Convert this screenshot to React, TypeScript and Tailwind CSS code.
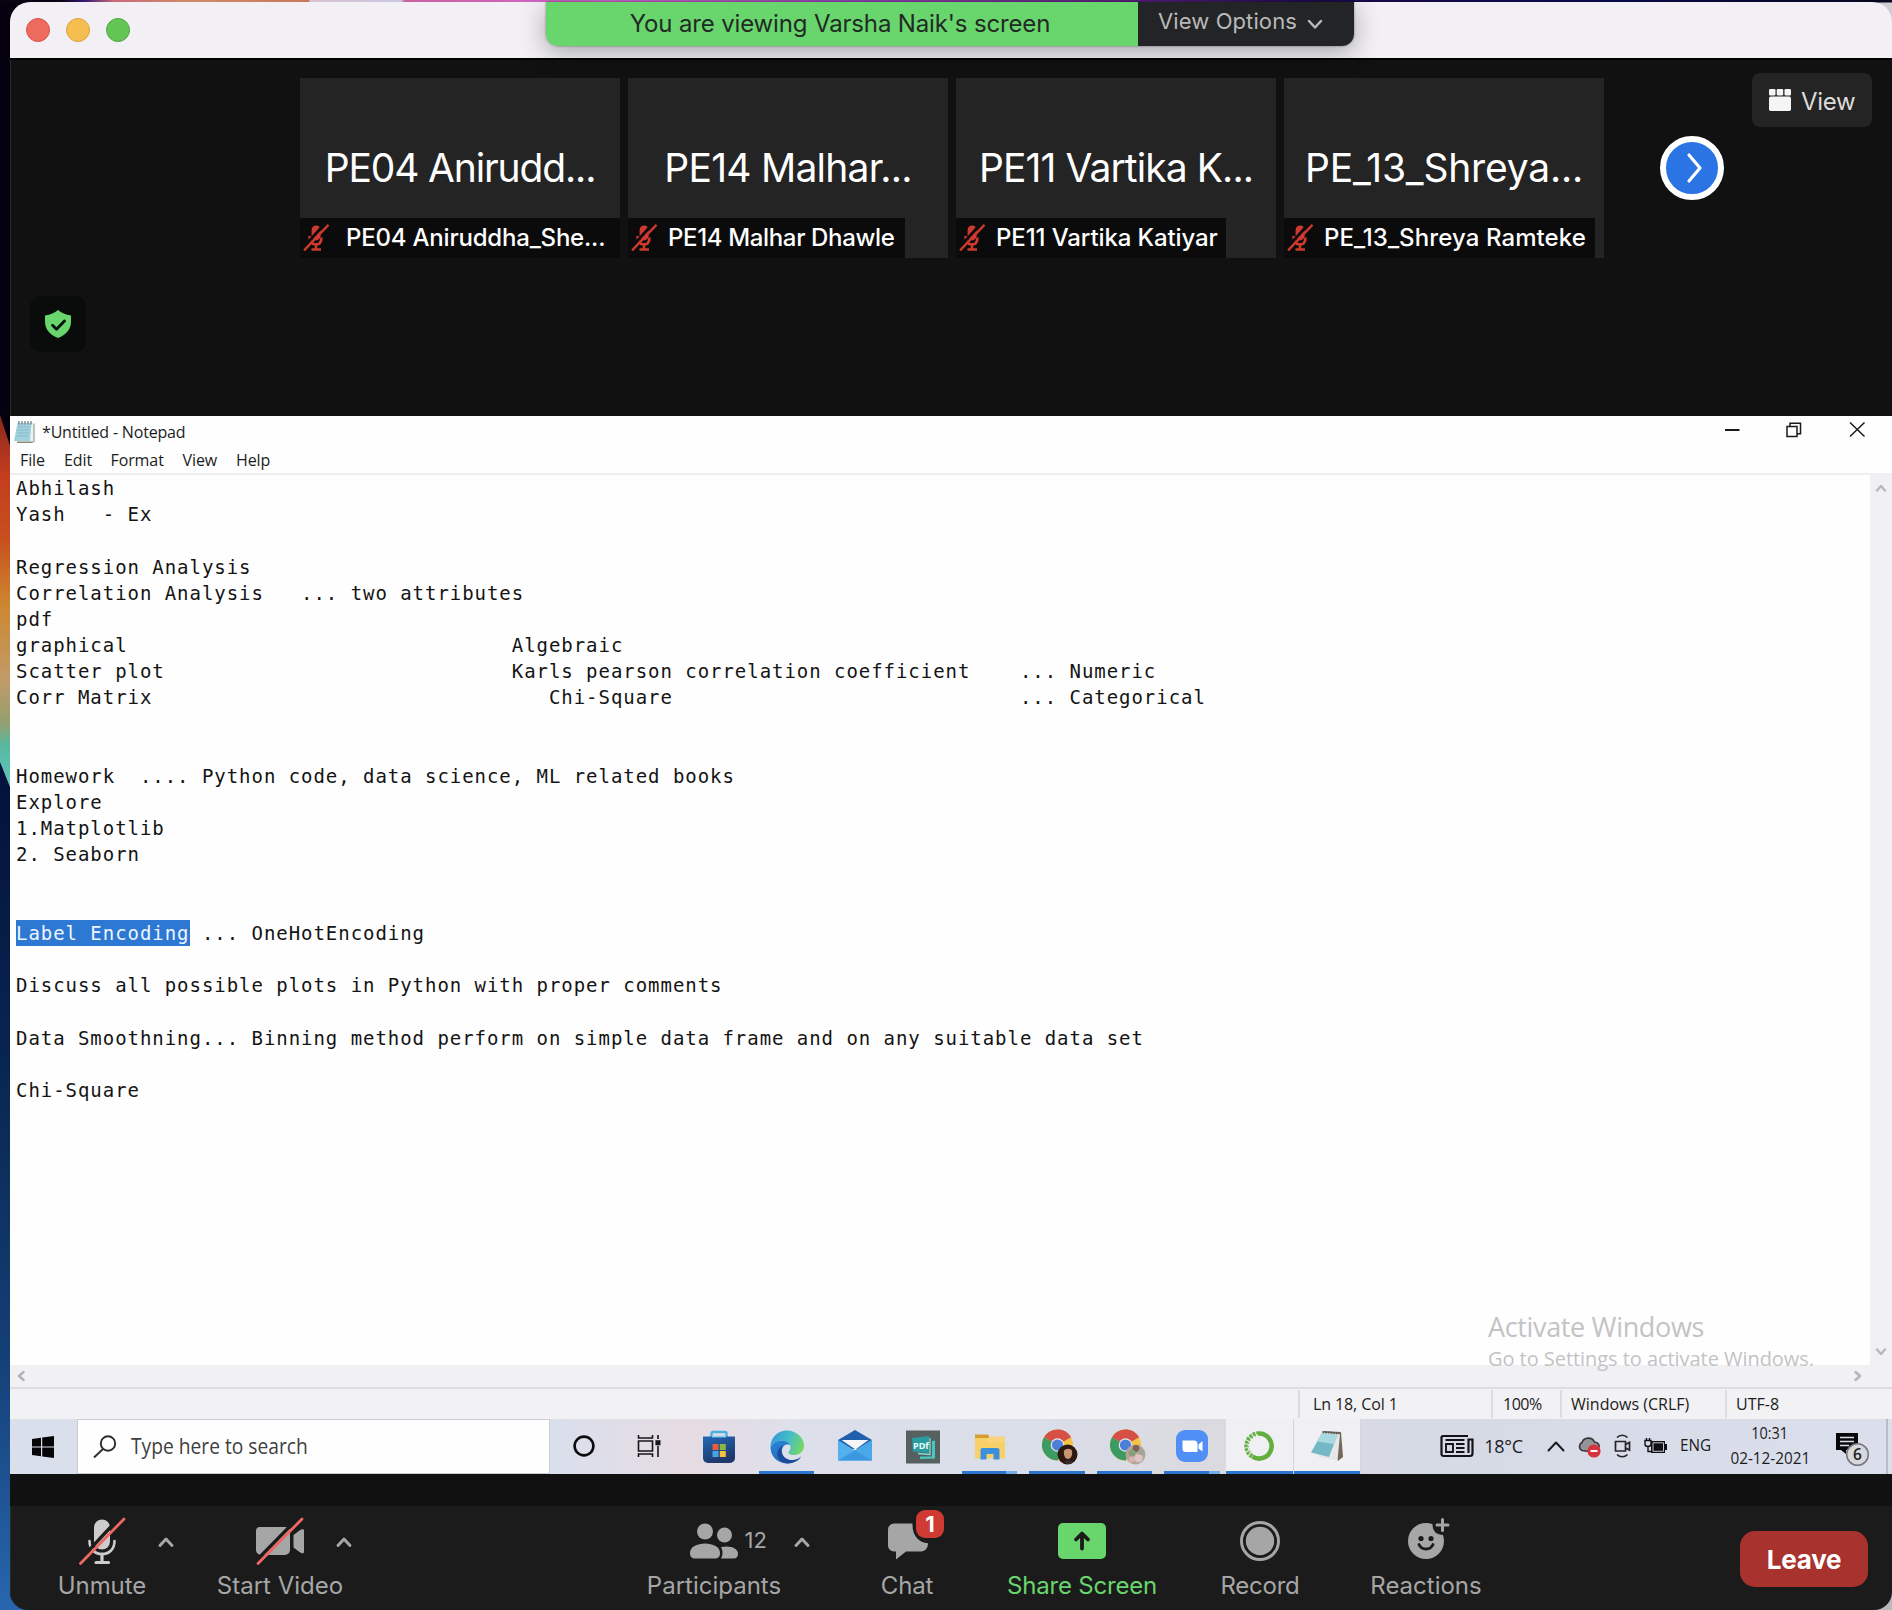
import type { ReactNode } from 'react';

/* ---------- shared icons ---------- */

function MutedMic() {
  return (
    <svg width="26" height="28" viewBox="0 0 26 28" className="shrink-0">
      <rect x="8.6" y="1.4" width="9" height="15" rx="4.500" fill="#cf3a30" />
      <path d="M6.500 12c0 5.500 2.500 8.500 6.500 8.500s5.500-2.500 5.500-7" stroke="#cf3a30" strokeWidth="2.600" fill="none" />
      <path d="M13 19.500v5.500M8.500 25.500h9.500" stroke="#cf3a30" strokeWidth="2.400" />
      <path d="M-1.500 25.500L22 -0.500" stroke="#0c0c0c" strokeWidth="2.800" />
      <path d="M1 26.500L25.500 0.800" stroke="#cf3a30" strokeWidth="2.400" />
    </svg>
  );
}

function Chevron({ points, className, width = 2.5, size }: { points: string; className?: string; width?: number; size: [number, number] }) {
  return (
    <svg width={size[0]} height={size[1]} viewBox={`0 0 ${size[0]} ${size[1]}`} fill="none" stroke="currentColor" strokeWidth={width} strokeLinecap="round" strokeLinejoin="round" className={className}>
      <polyline points={points} />
    </svg>
  );
}

/* ---------- desktop behind the window ---------- */

function Wallpaper() {
  return (
    <svg className="absolute inset-0" width="1892" height="1610" viewBox="0 0 1892 1610" preserveAspectRatio="none">
      <defs>
        <linearGradient id="wallTop" x1="0" x2="1">
          <stop offset="0.032" stopColor="#0a0316" />
          <stop offset="0.045" stopColor="#3a1a78" />
          <stop offset="0.06" stopColor="#c86a78" />
          <stop offset="0.1" stopColor="#d08a68" />
          <stop offset="0.163" stopColor="#c87858" />
          <stop offset="0.164" stopColor="#d8c0d0" />
          <stop offset="0.212" stopColor="#c8c8e0" />
          <stop offset="0.214" stopColor="#c860a0" />
          <stop offset="0.32" stopColor="#d068d0" />
          <stop offset="0.44" stopColor="#9a48b8" />
          <stop offset="0.6" stopColor="#5a2080" />
          <stop offset="0.7" stopColor="#1a0a48" />
          <stop offset="0.85" stopColor="#080a48" />
          <stop offset="1" stopColor="#060820" />
        </linearGradient>
        <linearGradient id="wallFlame" x1="0" x2="0" y1="417" y2="790" gradientUnits="userSpaceOnUse">
          <stop offset="0" stopColor="#8a2a1c" />
          <stop offset="0.15" stopColor="#c23c1e" />
          <stop offset="0.33" stopColor="#c8501f" />
          <stop offset="0.5" stopColor="#cc8630" />
          <stop offset="0.7" stopColor="#c29a68" />
          <stop offset="0.82" stopColor="#94a070" />
          <stop offset="0.88" stopColor="#58b8a0" />
          <stop offset="1" stopColor="#60c8c0" />
        </linearGradient>
        <linearGradient id="wallSea" x1="0" x2="0" y1="760" y2="1610" gradientUnits="userSpaceOnUse">
          <stop offset="0" stopColor="#03103c" />
          <stop offset="0.35" stopColor="#08254f" />
          <stop offset="0.7" stopColor="#143f76" />
          <stop offset="1" stopColor="#2766ae" />
        </linearGradient>
      </defs>
      <rect width="1892" height="1610" fill="#06010f" />
      <path d="M0 415L12 452V790H0z" fill="url(#wallFlame)" />
      <path d="M0 762L12 792V1610H0z" fill="url(#wallSea)" />
      <path d="M12 1560h40v50H12z" fill="#2766ae" />
      <path d="M1840 1560h52v50h-52z" fill="#b9b9bb" />
      <path d="M1860 2h32v30h-32z" fill="#cfcdd3" />
      <rect width="1892" height="2.500" fill="url(#wallTop)" />
    </svg>
  );
}

/* ---------- meeting window: top ---------- */

function TitleBar() {
  return (
    <div className="flex h-14 shrink-0 items-center gap-4 bg-[#f2f0f5] pl-4">
      <span className="size-6 rounded-full border border-[#d9544a] bg-[#ed6a5f]" />
      <span className="size-6 rounded-full border border-[#dba23c] bg-[#f6be50]" />
      <span className="size-6 rounded-full border border-[#50a73f] bg-[#62c554]" />
    </div>
  );
}

function ShareBanner() {
  return (
    <div className="absolute top-[2px] left-[546px] flex h-11 w-[808px] overflow-hidden rounded-b-xl font-['Inter',sans-serif] shadow-[0_6px_26px_rgba(0,0,0,0.32),0_0_2px_rgba(0,0,0,0.5)]">
      <div className="flex w-[592px] items-center justify-center bg-[#68d66c] pr-1 text-[24px] tracking-[-0.15px] text-[#232a26]">You are viewing Varsha Naik's screen</div>
      <div className="flex flex-1 items-center bg-[#222426] pb-1.5 pl-5 text-[22px] tracking-[0.1px] text-[#b9b9b9]">
        View Options
        <Chevron size={[16, 12]} points="2,3 8,9.500 14,3" className="mt-1.5 ml-2.5" />
      </div>
    </div>
  );
}

function Tile({ big, bigClass, name, nameClass, barClass }: { big: string; bigClass: string; name: string; nameClass: string; barClass: string }) {
  return (
    <div className="relative flex h-[180px] w-80 items-center justify-center bg-[#242424]">
      <span className={`whitespace-nowrap text-[39px] text-white ${bigClass}`}>{big}</span>
      <div className={`absolute bottom-0 left-0 flex h-10 items-center bg-[#0b0b0b] pl-[3px] ${barClass}`}>
        <MutedMic />
        <span className={`whitespace-nowrap text-[24px] font-medium text-white ${nameClass}`}>{name}</span>
      </div>
    </div>
  );
}

function Gallery() {
  return (
    <div className="relative flex h-[356px] shrink-0 border-l border-[#2a2a2a] bg-[#111111] pt-[18px] pl-[289px] font-['Inter',sans-serif]">
      <div className="flex gap-2">
        <Tile big="PE04 Anirudd..." bigClass="tracking-[-1.15px]" name="PE04 Aniruddha_She..." nameClass="ml-[17px] tracking-[-0.2px]" barClass="w-80" />
        <Tile big="PE14 Malhar..." bigClass="tracking-[-0.75px]" name="PE14 Malhar Dhawle" nameClass="ml-[11px] tracking-[-0.35px]" barClass="w-[277px]" />
        <Tile big="PE11 Vartika K..." bigClass="tracking-[-0.9px]" name="PE11 Vartika Katiyar" nameClass="ml-[11px] tracking-[-0.1px]" barClass="w-[270px]" />
        <Tile big="PE_13_Shreya..." bigClass="tracking-[-0.2px]" name="PE_13_Shreya Ramteke" nameClass="ml-[11px] tracking-[0.1px]" barClass="w-[311px]" />
      </div>
      <button className="mt-[58px] ml-14 flex size-16 items-center justify-center rounded-full border-[6px] border-white bg-[#2a74e4] text-white">
        <Chevron size={[20, 32]} width={3.200} points="5,3 16,16 5,29" className="ml-[3px]" />
      </button>
      <button className="-mt-[5px] ml-7 flex h-[54px] w-[120px] items-center rounded-lg bg-[#242424] pl-[17px] text-[24px] tracking-[-0.3px] text-[#dcdcdc]">
        <svg width="22" height="22" viewBox="0 0 22 22" fill="#f5f5f5">
          <rect width="6.500" height="6.500" rx="1.200" />
          <rect x="7.700" width="6.500" height="6.500" rx="1.200" />
          <rect x="15.500" width="6.500" height="6.500" rx="1.200" />
          <rect y="7.500" width="22" height="14.500" rx="1.800" />
        </svg>
        <span className="ml-2.5 pt-1">View</span>
      </button>
      <div className="absolute top-[236px] left-[19px] flex size-14 items-center justify-center rounded-[10px] bg-[#090c0a]">
        <svg width="26" height="28" viewBox="0 0 26 28">
          <path d="M13 0c3.500 2.800 7.500 5 13 5.600v6c0 8-5 13.400-13 16.400C5 25 0 19.600 0 11.600v-6C5.500 5 9.500 2.800 13 0z" fill="#68d66c" />
          <path d="M7.500 15.200l4 4L19.500 11" fill="none" stroke="#0a0d0b" strokeWidth="2.800" strokeLinecap="round" strokeLinejoin="round" />
        </svg>
      </div>
    </div>
  );
}

/* ---------- shared Windows desktop ---------- */

const note = [
  'Abhilash',
  'Yash   - Ex',
  '',
  'Regression Analysis',
  'Correlation Analysis   ... two attributes',
  'pdf',
  'graphical'.padEnd(40) + 'Algebraic',
  'Scatter plot'.padEnd(40) + 'Karls pearson correlation coefficient'.padEnd(41) + '... Numeric',
  'Corr Matrix'.padEnd(43) + 'Chi-Square'.padEnd(38) + '... Categorical',
  '',
  '',
  'Homework  .... Python code, data science, ML related books',
  'Explore',
  '1.Matplotlib',
  '2. Seaborn',
  '',
  '',
  '@Label Encoding',
  '',
  'Discuss all possible plots in Python with proper comments',
  '',
  'Data Smoothning... Binning method perform on simple data frame and on any suitable data set',
  '',
  'Chi-Square',
];

function NoteLine({ text }: { text: string }) {
  return (
    <div className="h-[26.18px] whitespace-pre leading-[26.18px]">
      {text.startsWith('@') ? (
        <>
          <span className="inline-block h-[26px] bg-[#2d78d2] text-[#eef5ff]">{text.slice(1)}</span> ... OneHotEncoding
        </>
      ) : (
        text
      )}
    </div>
  );
}

function Notepad() {
  return (
    <div className="relative flex shrink-0 flex-col bg-[#fefefe] font-['Open_Sans',sans-serif] text-[16px] text-[#1c1c1c]">
      <div className="flex h-[31px] items-center pl-1">
        <svg width="21" height="22" viewBox="0 0 21 22">
          <path d="M4.500 2.500h16v18.500l-3 1H3z" fill="#8c8c78" />
          <path d="M4 2h15.500v18.500H1z" fill="#e9f3f5" />
          <path d="M3.500 2h14L16 20H0z" fill="#a3d2df" />
          <path d="M4 6h12M3.500 9h12M3 12h12M2.500 15h12" stroke="#7db5c6" strokeWidth="0.800" />
          <path d="M5 0v3.500M8 0v3.500M11 0v3.500M14 0v3.500M17 0v3.500" stroke="#6a7478" strokeWidth="1.200" />
        </svg>
        <span className="ml-[7px] tracking-[-0.18px]">*Untitled - Notepad</span>
        <svg width="145" height="20" viewBox="0 0 145 20" className="mr-[24px] mb-2 ml-auto" fill="none" stroke="#1a1a1a" strokeWidth="1.500">
          <path d="M2 12h14.500" strokeWidth="2" />
          <path d="M64 8.500h10v10H64zM67 8V5.200h10.500v10.500H74.500" />
          <path d="M127 4.500l14.500 14M141.500 4.500L127 18.500" />
        </svg>
      </div>
      <div className="flex h-[26px] items-center pl-2.5 tracking-[-0.1px]">
        <span className="w-[44px]">File</span>
        <span className="w-[46.5px]">Edit</span>
        <span className="w-[72px]">Format</span>
        <span className="w-[53.5px]">View</span>
        <span>Help</span>
      </div>
      <div className="h-0.5 bg-[#efeef0]" />
      <div className="flex h-[890px]">
        <div className="flex-1 pl-1.5 font-['DejaVu_Sans_Mono',monospace] text-[19px] tracking-[0.955px] text-[#141414]">
          {note.map((t, i) => (
            <NoteLine key={i} text={t} />
          ))}
        </div>
        <div className="flex w-[22px] flex-col items-center justify-between bg-[#f1f0f3] py-[7px] text-[#b9b9bb]">
          <Chevron size={[14, 12]} points="3,8.500 7,4 11,8.500" />
          <Chevron size={[14, 12]} points="3,3.500 7,8 11,3.500" />
        </div>
      </div>
      <div className="flex h-[22px] items-center justify-between bg-[#f1f0f3] pr-[28px] pl-[5px] text-[#b4b4b6]">
        <Chevron size={[12, 14]} points="8.500,3 4,7 8.500,11" />
        <Chevron size={[12, 14]} points="3.500,3 8,7 3.500,11" />
      </div>
      <div className="h-0.5 bg-[#dedcdf]" />
      <div className="flex h-[30px] items-center justify-end bg-[#f2f1f3]">
        <span className="flex h-7 w-[193px] items-center border-l-2 border-[#dddcde] pl-[13px] tracking-[-0.1px]">Ln 18, Col 1</span>
        <span className="flex h-7 w-[69px] items-center border-l-2 border-[#dddcde] pl-2.5 tracking-[-0.500px]">100%</span>
        <span className="flex h-7 w-[165px] items-center border-l-2 border-[#dddcde] pl-[9px]">Windows (CRLF)</span>
        <span className="flex h-7 w-[167px] items-center border-l-2 border-[#dddcde] pl-[9px]">UTF-8</span>
      </div>
      <div className="absolute top-[892px] left-[1478px] whitespace-nowrap text-[#c3c3c5]">
        <div className="text-[27px] leading-[38px] tracking-[-0.350px]">Activate Windows</div>
        <div className="text-[20px] leading-[26px] tracking-[-0.05px]">Go to Settings to activate Windows.</div>
      </div>
    </div>
  );
}

function Slot({ children, line, split, active }: { children: ReactNode; line?: boolean; split?: boolean; active?: boolean }) {
  return (
    <div className={`relative flex h-full w-[67.6px] items-center justify-center ${active ? 'border-r border-[#d5d5da] bg-[#efeff4]' : ''}`}>
      {children}
      {line && (
        <span className={`absolute bottom-0 flex h-[3px] ${active ? 'inset-x-0' : 'inset-x-1.5'}`}>
          <i className="flex-1 bg-[#2d76cf]" />
          {split && <i className="w-[11px] bg-[#74ace8]" />}
        </span>
      )}
    </div>
  );
}

function Chrome({ children }: { children: ReactNode }) {
  return (
    <svg width="36" height="36" viewBox="0 0 36 36" className="ml-1.5">
      <circle cx="15.500" cy="16" r="15.500" fill="#f4c244" />
      <path d="M15.500 16L2 8.300A15.500 15.500 0 0 1 29 8.300z" fill="#d65045" />
      <path d="M15.500 .5A15.500 15.500 0 0 1 29 8.500H15.500z" fill="#d65045" />
      <path d="M2 8.300A15.500 15.500 0 0 0 15.500 31.500L22 20l-6.500-4z" fill="#3c9b62" />
      <circle cx="15.500" cy="16" r="6.800" fill="#e8e8ee" />
      <circle cx="15.500" cy="16" r="5.600" fill="#4a80d8" />
      {children}
    </svg>
  );
}

function Taskbar() {
  return (
    <div className="flex h-[55px] shrink-0 items-center bg-[linear-gradient(90deg,#dadfec_0%,#dadfec_29%,#e6dce3_36%,#dde0eb_42%,#dadee9_55%,#dbdae0_63%,#d6dae5_75%,#dbdfec_100%)] font-['Open_Sans',sans-serif] text-[#1c1c1e]">
      <div className="flex w-[67px] justify-center">
        <svg width="22" height="22" viewBox="0 0 22 22" className="mr-0.5">
          <path d="M0 3l9-1.200v8.600H0zM10.200 1.600L22 0v10.400H10.200zM0 11.600h9v8.600L0 19zM10.200 11.600H22V22l-11.800-1.600z" fill="#060608" />
        </svg>
      </div>
      <div className="flex h-full w-[473px] items-center border border-[#cbccd2] bg-[#fefefe] pl-[15px]">
        <svg width="24" height="24" viewBox="0 0 24 24" fill="none" stroke="#2c2c2e" strokeWidth="1.900">
          <circle cx="15" cy="8.500" r="7.200" />
          <path d="M10 14L1 22.500" />
        </svg>
        <span className="ml-[14px] origin-left scale-x-[0.915] whitespace-nowrap text-[21px] text-[#3e3e40]">Type here to search</span>
      </div>
      <Slot>
        <svg width="24" height="24" viewBox="0 0 24 24" className="mb-0.5">
          <circle cx="12" cy="12" r="9.400" fill="none" stroke="#0c0c10" strokeWidth="2.600" />
        </svg>
      </Slot>
      <Slot>
        <svg width="24" height="22" viewBox="0 0 24 22" fill="none" stroke="#16161a" strokeWidth="1.600" className="mr-1 mb-0.5">
          <path d="M1.500 6h14v10h-14zM1.500 0v3h14V0M1.500 22v-3h14v3M21 0v4M21 11v11" />
          <rect x="19.200" y="6" width="3.500" height="3.500" fill="#16161a" />
        </svg>
      </Slot>
      <Slot>
        <svg width="32" height="34" viewBox="0 0 32 34">
          <defs>
            <linearGradient id="store" x1="0" y1="0" x2="0.4" y2="1">
              <stop offset="0" stopColor="#2468b8" />
              <stop offset="1" stopColor="#20386a" />
            </linearGradient>
          </defs>
          <path d="M8.500 8V3.500a1.500 1.500 0 0 1 1.500-1.500h12a1.500 1.500 0 0 1 1.500 1.500V8" fill="none" stroke="#48b0e4" strokeWidth="2.400" />
          <path d="M0 6.500h32V28a5 5 0 0 1-5 5H5a5 5 0 0 1-5-5z" fill="url(#store)" />
          <path d="M9 6.500h14" stroke="#8fd4f4" strokeWidth="1.800" />
          <path d="M9.500 14h6v6h-6z" fill="#e8603a" />
          <path d="M16.800 14h6v6h-6z" fill="#8ab83c" />
          <path d="M9.500 21h6v6h-6z" fill="#4aa4e4" />
          <path d="M16.800 21h6v6h-6z" fill="#f6c03c" />
        </svg>
      </Slot>
      <Slot line>
        <svg width="34" height="34" viewBox="0 0 34 34">
          <defs>
            <linearGradient id="edgeTop" x1="0" y1="0.300" x2="1" y2="0.600">
              <stop offset="0" stopColor="#2f9ad4" />
              <stop offset="0.5" stopColor="#46bcc8" />
              <stop offset="1" stopColor="#74d860" />
            </linearGradient>
            <linearGradient id="edgeLow" x1="0" y1="0" x2="0.5" y2="1">
              <stop offset="0" stopColor="#2a88d8" />
              <stop offset="1" stopColor="#2468b8" />
            </linearGradient>
          </defs>
          <path d="M0.500 16.500C1 7 8 0.500 17 0.500S34 7.500 34 15.500c0 6-4.500 9.500-9.500 9.500-4.200 0-6-1.500-6-2.800 0-.8 2-1.700 2-4.700 0-3.500-3.500-7-9-7-4.600 0-8.500 2-11 6z" fill="url(#edgeTop)" />
          <path d="M0.500 16.500c2.500-4 6.400-6 11-6 4.500 0 7.500 2 8.600 4.500-4.600-1.500-8.100 1-8.100 6 0 6 5 10 11 10.500-2 1.400-4 1.900-6 1.900C7 33.400 .2 26 .5 16.500z" fill="url(#edgeLow)" />
          <path d="M13.500 15.800c-2 1.700-2.500 3.500-2 6.200 1 5.500 6.500 8.500 12 8 3-.3 5.500-1.500 7.500-3.500-3 7-16 9.500-21.500 3.500-4-5-2.500-12 4-14.200z" fill="#1c4c9c" />
        </svg>
      </Slot>
      <Slot>
        <svg width="34" height="32" viewBox="0 0 34 32" className="mb-1 ml-0.5">
          <path d="M0 11L17 1l17 10v9H0z" fill="#2060ac" />
          <path d="M0 11l17 10.500L34 11v20.500H0z" fill="#54b0ec" />
          <path d="M0 31.500L17 21.500 34 11v20.500z" fill="#3c98e0" />
          <path d="M17 21.500L34 31.500V11z" fill="#4aa8e8" />
          <path d="M3.500 11h27L17.500 20.500z" fill="#f4f6fa" />
        </svg>
      </Slot>
      <Slot>
        <svg width="34" height="34" viewBox="0 0 34 34" className="ml-0.5">
          <path d="M0 .5h34v33H0z" fill="#56605f" />
          <path d="M14 26.500h12V11l3-.5v18l-15 .5z" fill="#48c8c0" />
          <path d="M6 8l17-2v17L7 21.500z" fill="#2a9ca0" />
          <path d="M12 23.500l12 1V8" fill="none" stroke="#7ce0d8" strokeWidth="1.300" />
          <text x="7" y="18.500" fontFamily="Open Sans" fontWeight="700" fontSize="9" fill="#e8fffc">PDf</text>
        </svg>
      </Slot>
      <Slot line split>
        <svg width="32" height="28" viewBox="0 0 32 28" className="ml-0.5">
          <path d="M1 1.500h13l2 3.500H1z" fill="#d89c30" />
          <path d="M1 5h30v19a1.500 1.500 0 0 1-1.500 1.500h-27A1.500 1.500 0 0 1 1 24z" fill="#f8d068" />
          <path d="M15 3.500h15a1 1 0 0 1 1 1V9H13z" fill="#f8d47c" />
          <path d="M6.500 26.500V17a2 2 0 0 1 2-2h15a2 2 0 0 1 2 2v9.500h-6V21h-7v5.500z" fill="#3e8ede" />
        </svg>
      </Slot>
      <Slot line>
        <Chrome>
          <circle cx="25.500" cy="25.500" r="10" fill="#2e1812" />
          <ellipse cx="26" cy="24" rx="4.200" ry="6" fill="#c99472" />
          <path d="M22 33c2-2.500 7-2.500 9 0-2.500 2.500-6.500 2.500-9 0z" fill="#3a2a2e" />
          <path d="M21 22c1-6 9-6 10 0-3-3-6-3-10 0z" fill="#2e1812" />
        </Chrome>
      </Slot>
      <Slot line>
        <Chrome>
          <circle cx="25.500" cy="25.500" r="10" fill="#b4a49c" />
          <circle cx="26" cy="19.500" r="3.500" fill="#806058" />
          <circle cx="22" cy="24" r="3.500" fill="#88a078" />
          <circle cx="28.500" cy="29" r="4.200" fill="#e0c4c4" />
          <circle cx="22" cy="30.500" r="3" fill="#d8b4b0" />
          <circle cx="31" cy="23" r="3" fill="#a0a890" />
        </Chrome>
      </Slot>
      <Slot line split>
        <svg width="32" height="32" viewBox="0 0 32 32" className="mb-0.5">
          <rect width="32" height="32" rx="9" fill="#5090f6" />
          <path d="M6.500 10.500h11.500a3.500 3.500 0 0 1 3.500 3.500v8H10a3.500 3.500 0 0 1-3.500-3.500zM22.500 14.500l4-3.500v10.500l-4-3z" fill="#fff" />
        </svg>
      </Slot>
      <Slot line active>
        <svg width="32" height="32" viewBox="0 0 32 32" fill="none" stroke="#62ae3e" className="mb-0.5">
          <path d="M16 3.500A12.500 12.500 0 1 1 9.500 26.600" strokeWidth="4.600" />
          <path d="M16 3.500A12.500 12.500 0 0 0 9.500 26.600" strokeWidth="4.600" strokeDasharray="2.600 1" />
          <path d="M15 5A11.500 11.500 0 0 0 8.500 24.500" stroke="#efeff4" strokeWidth="1.300" strokeDasharray="1.700 1.900" />
        </svg>
      </Slot>
      <Slot line active>
        <svg width="34" height="32" viewBox="0 0 34 32" className="mb-0.5">
          <path d="M13 1l18 1 2 25-5 4z" fill="#75695c" />
          <path d="M12.500 2.500L30 4l-2.500 26.500L8 27z" fill="#e6e8e8" />
          <path d="M12 3l15.500 2L19 27 1 22.500z" fill="#74b8c6" />
          <path d="M12 3l15.500 2-3.500 9L7 11.500z" fill="#a8d8e0" />
          <path d="M12.500 2l17 1.500" stroke="#5a5450" strokeWidth="2" strokeDasharray="1.500 1.200" />
        </svg>
      </Slot>
      <svg width="34" height="24" viewBox="0 0 34 24" className="mb-0.5 ml-[79px]" fill="none" stroke="#141418" strokeWidth="2.200">
        <path d="M28 2H3a1.500 1.500 0 0 0-1.500 1.500v17A2 2 0 0 0 3.500 22H30a2.500 2.500 0 0 0 2.500-2.500V5.500H28.500V19" />
        <path d="M6 10h7v8H6zM5.500 6h19M16 10h8.500M16 14h8.500M16 18h8.500" strokeWidth="1.900" />
      </svg>
      <span className="ml-2.5 w-[63px] text-[18px] tracking-[-0.2px]">18°C</span>
      <Chevron size={[18, 12]} width={2} points="1.500,10.500 9,2.500 16.500,10.500" className="mb-0.5" />
      <svg width="24" height="22" viewBox="0 0 24 22" className="ml-3">
        <path d="M5 14.500A4.500 4.500 0 0 1 5 6.500C7 1 15 .5 17.500 6c4 .5 5 3 4.500 5l-6 5z" fill="#96929a" stroke="#38363c" strokeWidth="1.600" />
        <circle cx="17" cy="15" r="6.600" fill="#d6343c" />
        <path d="M13.500 15h7" stroke="#fff" strokeWidth="1.900" />
      </svg>
      <svg width="17" height="24" viewBox="0 0 17 24" className="mb-0.5 ml-[13px]" fill="none" stroke="#242428" strokeWidth="1.700">
        <path d="M1.500 7.500h10v9.500h-10zM11.500 10.500L15.500 8.500v7.500l-4-2M3 3.500c3-3 7.500-3 10.500 0M3 20.500c3 3 7.500 3 10.500 0" />
      </svg>
      <svg width="24" height="18" viewBox="0 0 24 18" className="mb-0.5 ml-[13px]">
        <path d="M7 4h14v3h2v6h-2v3H7z" fill="#101014" />
        <path d="M9 5.800h10.500v8.500H9z" fill="#101014" stroke="#d8dce8" strokeWidth="0.900" />
        <path d="M1 3.500h6V7c0 1.500-1 2.500-3 2.500S1 8.500 1 7zM2.500 1v2.500M5.500 1v2.500M4 9v5.500h4" stroke="#101014" strokeWidth="1.400" fill="none" />
      </svg>
      <span className="mb-[3px] ml-3 w-12 origin-left scale-x-[0.9] text-[17px]">ENG</span>
      <div className="mb-[3px] flex w-[84px] flex-col items-center text-[17px] leading-[25px]">
        <span className="scale-x-[0.85]">10:31</span>
        <span className="scale-x-[0.9] whitespace-nowrap">02-12-2021</span>
      </div>
      <svg width="36" height="36" viewBox="0 0 36 36" className="mt-1 ml-[23px]">
        <path d="M1 2h22v17H11v4l-5-4H1z" fill="#08080a" />
        <path d="M5 6.500h14M5 10.500h14M5 14.500h9" stroke="#dadeea" strokeWidth="1.600" />
        <circle cx="22.500" cy="23.500" r="10.800" fill="#d6d8de" stroke="#77787e" strokeWidth="1.500" />
        <text x="22.500" y="29" textAnchor="middle" fontFamily="Open Sans" fontWeight="600" fontSize="15.500" fill="#1c1c20">6</text>
      </svg>
      <span className="mr-1 ml-auto h-full w-0.5 bg-[#b9bdc9]" />
    </div>
  );
}

/* ---------- meeting toolbar ---------- */

function Tool({ icon, label, className, caret }: { icon: ReactNode; label: string; className: string; caret?: string }) {
  return (
    <button className={`relative flex flex-col items-center pt-[11px] ${className}`}>
      <span className="flex h-12 items-center">{icon}</span>
      <span className="mt-[9px] whitespace-nowrap text-[24px] leading-6">{label}</span>
      {caret && <Chevron size={[18, 12]} width={3} points="3,9.500 9,3 15,9.500" className={`absolute top-[30px] ${caret}`} />}
    </button>
  );
}

function Toolbar() {
  return (
    <div className="relative flex h-[104px] shrink-0 border-l border-[#2a2a2a] bg-[#1b1b1b] pl-[41px] font-['Inter',sans-serif] text-[#a6a6a6]">
      <Tool
        className="w-[100px] tracking-[-0.1px]"
        label="Unmute"
        caret="left-[105px]"
        icon={
          <svg width="48" height="48" viewBox="0 0 48 48">
            <rect x="16" y="2.500" width="16" height="30" rx="8" fill="#cccccc" />
            <path d="M11.500 24c0 8 5 13 12.500 13s12.500-5 12.500-13" fill="none" stroke="#cccccc" strokeWidth="2.600" strokeLinecap="round" />
            <path d="M24 37v8M18 45.500h12.500" stroke="#cccccc" strokeWidth="3.200" strokeLinecap="round" />
            <path d="M-1 46L43 -1" stroke="#1b1b1b" strokeWidth="3.400" />
            <path d="M2.500 46.500L46 2" stroke="#ee6860" strokeWidth="2.800" strokeLinecap="round" />
          </svg>
        }
      />
      <Tool
        className="ml-[58px] w-[140px]"
        label="Start Video"
        caret="left-[125px]"
        icon={
          <svg width="48" height="48" viewBox="0 0 48 48">
            <path d="M4 10h26a4 4 0 0 1 4 4v19a5 5 0 0 1-5 5H5a5 5 0 0 1-5-5V14a4 4 0 0 1 4-4zM37.500 18l6-4.500c2-1.500 4.500-2 4.500 0v21.500c0 2-2.500 1.500-4.500 0l-6-4.500z" fill="#a6a6a6" />
            <path d="M-1 45L43 0" stroke="#1b1b1b" strokeWidth="3.400" />
            <path d="M2 46.500L46 2" stroke="#ee6860" strokeWidth="2.800" strokeLinecap="round" />
          </svg>
        }
      />
      <Tool
        className="ml-[284px] w-[160px]"
        label="Participants"
        caret="left-[159px]"
        icon={
          <span className="relative">
            <svg width="48" height="36" viewBox="0 0 48 36" fill="#a6a6a6">
              <circle cx="15" cy="8.500" r="8" />
              <circle cx="34.500" cy="12" r="7.500" />
              <path d="M0 30c0-6 7-9.500 15-9.500S30 24 30 30c0 4-2 5.500-5 5.500H5c-3 0-5-1.500-5-5.500z" />
              <path d="M31 24c9-2 17 1 17 6.500 0 3.500-1.500 5-4.500 5H31c1.800-3 2.300-7 0-11.500z" />
            </svg>
            <span className="absolute top-px left-[54.500px] text-[22px]">12</span>
          </span>
        }
      />
      <Tool
        className="ml-[73px] w-20 tracking-[-0.2px]"
        label="Chat"
        icon={
          <span className="relative mt-px ml-0.5">
            <svg width="40" height="37" viewBox="0 0 40 37">
              <path d="M6 .5h18.500c-.5 12 6 19 15.500 19.800 0 5-3 8.200-7 8.200H18L8 36.500V28.500H6a6 6 0 0 1-6-6v-16a6 6 0 0 1 6-6z" fill="#a6a6a6" />
            </svg>
            <span className="absolute -top-[13px] left-7 flex size-7 items-center justify-center rounded-[9px] bg-[#cf3a32] text-[22px] font-bold tracking-normal text-white">1</span>
          </span>
        }
      />
      <Tool
        className="ml-[50px] w-[170px] tracking-[-0.2px] text-[#68d66c]"
        label="Share Screen"
        icon={
          <span className="flex h-9 w-12 items-center justify-center rounded-[5px] bg-[#68d66c] text-[#1b1b1b]">
            <svg width="20" height="22" viewBox="0 0 20 22" fill="none" stroke="currentColor" strokeWidth="3.800" strokeLinecap="round" strokeLinejoin="round">
              <path d="M10 18.500V4M4 9.500L10 3.500l6 6" />
            </svg>
          </span>
        }
      />
      <Tool
        className="ml-[43px] w-[100px] tracking-[-0.25px]"
        label="Record"
        icon={
          <svg width="40" height="40" viewBox="0 0 40 40">
            <circle cx="20" cy="20" r="18.500" fill="none" stroke="#a6a6a6" strokeWidth="3" />
            <circle cx="20" cy="20" r="14.200" fill="#a6a6a6" />
          </svg>
        }
      />
      <Tool
        className="ml-[51px] w-[130px]"
        label="Reactions"
        icon={
          <svg width="48" height="48" viewBox="0 0 48 48" className="ml-0.5">
            <circle cx="23" cy="24" r="18" fill="#a6a6a6" />
            <circle cx="39" cy="8.500" r="9.500" fill="#1b1b1b" />
            <path d="M39.500 2.500v11M34 8h11" stroke="#a6a6a6" strokeWidth="3" strokeLinecap="round" />
            <circle cx="18" cy="21.500" r="2.600" fill="#1b1b1b" />
            <circle cx="28" cy="21.500" r="2.600" fill="#1b1b1b" />
            <path d="M16 27.500c2.500 6 11.500 6 14 0" fill="none" stroke="#1b1b1b" strokeWidth="2.800" strokeLinecap="round" />
          </svg>
        }
      />
      <button className="mt-[25px] mr-6 ml-auto flex h-14 w-32 items-center justify-center rounded-[15px] bg-[#a8322d] text-[26px] font-bold tracking-[-0.2px] text-white">Leave</button>
    </div>
  );
}

export default function App() {
  return (
    <div className="relative h-[1610px] w-[1892px] overflow-hidden">
      <Wallpaper />
      <div className="relative mt-0.5 ml-2.5 flex h-[1608px] flex-col overflow-hidden rounded-t-[20px] rounded-b-[18px]">
        <TitleBar />
        <div className="h-0.5 shrink-0 bg-black" />
        <Gallery />
        <Notepad />
        <Taskbar />
        <div className="h-8 shrink-0 bg-[#111111]" />
        <Toolbar />
      </div>
      <ShareBanner />
    </div>
  );
}
